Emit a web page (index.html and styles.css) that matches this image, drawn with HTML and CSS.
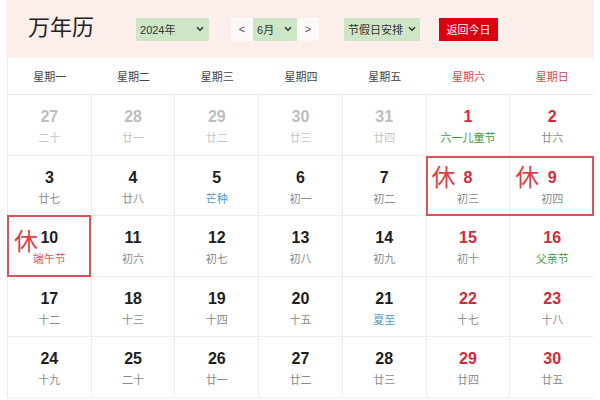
FILE: index.html
```html
<!DOCTYPE html>
<html lang="zh">
<head>
<meta charset="utf-8">
<link rel="stylesheet" href="styles.css">
</head>
<body>
<div class="page">
  <header class="bar">
    <h1 class="title">万年历</h1>
    <div class="sel sel-year"><span>2024年</span><svg class="chev" width="8" height="6" viewBox="0 0 8 6"><path d="M1 1.2 L4 4.2 L7 1.2" fill="none" stroke="#333" stroke-width="1.6"/></svg></div>
    <div class="month-group">
      <div class="nav">&lt;</div>
      <div class="sel sel-month"><span>6月</span><svg class="chev" width="8" height="6" viewBox="0 0 8 6"><path d="M1 1.2 L4 4.2 L7 1.2" fill="none" stroke="#333" stroke-width="1.6"/></svg></div>
      <div class="nav">&gt;</div>
    </div>
    <div class="sel sel-hol"><span>节假日安排</span><svg class="chev" width="8" height="6" viewBox="0 0 8 6"><path d="M1 1.2 L4 4.2 L7 1.2" fill="none" stroke="#333" stroke-width="1.6"/></svg></div>
    <div class="today">返回今日</div>
  </header>

  <div class="weekdays">
    <div>星期一</div><div>星期二</div><div>星期三</div><div>星期四</div><div>星期五</div><div class="we">星期六</div><div class="we">星期日</div>
  </div>

  <div class="grid">
    <div class="cell other"><b>27</b><span>二十</span></div>
    <div class="cell other"><b>28</b><span>廿一</span></div>
    <div class="cell other"><b>29</b><span>廿二</span></div>
    <div class="cell other"><b>30</b><span>廿三</span></div>
    <div class="cell other"><b>31</b><span>廿四</span></div>
    <div class="cell red"><b>1</b><span class="fest">六一儿童节</span></div>
    <div class="cell red"><b>2</b><span>廿六</span></div>

    <div class="cell"><b>3</b><span>廿七</span></div>
    <div class="cell"><b>4</b><span>廿八</span></div>
    <div class="cell"><b>5</b><span class="term">芒种</span></div>
    <div class="cell"><b>6</b><span>初一</span></div>
    <div class="cell"><b>7</b><span>初二</span></div>
    <div class="cell red"><i class="rest">休</i><b>8</b><span>初三</span></div>
    <div class="cell red"><i class="rest">休</i><b>9</b><span>初四</span></div>

    <div class="cell"><i class="rest rest-low">休</i><b>10</b><span class="holi">端午节</span></div>
    <div class="cell"><b>11</b><span>初六</span></div>
    <div class="cell"><b>12</b><span>初七</span></div>
    <div class="cell"><b>13</b><span>初八</span></div>
    <div class="cell"><b>14</b><span>初九</span></div>
    <div class="cell red"><b>15</b><span>初十</span></div>
    <div class="cell red"><b>16</b><span class="fest">父亲节</span></div>

    <div class="cell"><b>17</b><span>十二</span></div>
    <div class="cell"><b>18</b><span>十三</span></div>
    <div class="cell"><b>19</b><span>十四</span></div>
    <div class="cell"><b>20</b><span>十五</span></div>
    <div class="cell"><b>21</b><span class="term">夏至</span></div>
    <div class="cell red"><b>22</b><span>十七</span></div>
    <div class="cell red"><b>23</b><span>十八</span></div>

    <div class="cell"><b>24</b><span>十九</span></div>
    <div class="cell"><b>25</b><span>二十</span></div>
    <div class="cell"><b>26</b><span>廿一</span></div>
    <div class="cell"><b>27</b><span>廿二</span></div>
    <div class="cell"><b>28</b><span>廿三</span></div>
    <div class="cell red"><b>29</b><span>廿四</span></div>
    <div class="cell red"><b>30</b><span>廿五</span></div>

    <div class="mark mark-weekend"></div>
    <div class="mark mark-duanwu"></div>
  </div>
</div>
</body>
</html>
```

FILE: styles.css
```css
* { box-sizing: border-box; }
html, body { margin: 0; padding: 0; background: #fff; }
body {
  width: 600px;
  height: 400px;
  overflow: hidden;
  font-family: "Liberation Sans", "Noto Sans CJK SC", sans-serif;
  color: #333;
}
.page {
  margin-left: 6px;
  width: 588px;
}
.bar {
  height: 58px;
  background: #fbeeeb;
  display: flex;
  align-items: center;
  padding-left: 22px;
}
.title {
  margin: 0 42px 0 0;
  font-family: "Noto Sans CJK SC", sans-serif;
  font-weight: 400;
  font-size: 22px;
  line-height: 26px;
  color: #222;
  position: relative;
  top: -4px;
}
.sel {
  height: 23px;
  background: #cde6c6;
  display: flex;
  align-items: center;
  justify-content: space-between;
  padding: 0 5px 0 4px;
  font-family: "Liberation Sans", "Noto Sans CJK SC", sans-serif;
  font-size: 11px;
  color: #333;
}
.chev { display: block; }
.sel-year { width: 73px; }
.month-group {
  display: flex;
  margin-left: 22px;
}
.nav {
  width: 22px;
  height: 23px;
  background: #fdf9f8;
  display: flex;
  align-items: center;
  justify-content: center;
  font-size: 11px;
  color: #555;
}
.sel-month { width: 44px; }
.sel-hol { width: 76px; margin-left: 25px; padding-right: 4px; }
.today {
  margin-left: 19px;
  width: 59px;
  height: 23px;
  background: #d9000f;
  color: #fff;
  font-family: "Noto Sans CJK SC", sans-serif;
  font-size: 11px;
  display: flex;
  align-items: center;
  justify-content: center;
}

.weekdays {
  margin-left: 1px;
  height: 37px;
  display: grid;
  grid-template-columns: repeat(7, 1fr);
  align-items: center;
  border-left: 1px solid #ececec;
  border-bottom: 1px solid #ececec;
  font-family: "Noto Sans CJK SC", sans-serif;
  font-size: 11px;
  color: #444;
  text-align: center;
  padding-bottom: 1px;
}
.weekdays .we { color: #cf4a4a; }

.grid {
  position: relative;
  margin-left: 1px;
  display: grid;
  grid-template-columns: repeat(7, 1fr);
  grid-template-rows: repeat(5, 60.6px);
  border-left: 1px solid #ececec;
}
.cell {
  position: relative;
  border-right: 1px solid #ededed;
  border-bottom: 1px solid #ededed;
  display: flex;
  flex-direction: column;
  align-items: center;
  padding-top: 13px;
}
.cell:nth-child(7n) { border-right: none; }
.cell b {
  font-family: "Liberation Sans", sans-serif;
  font-weight: 700;
  font-size: 16px;
  line-height: 18px;
  color: #1e1e1e;
}
.cell span {
  margin-top: 4px;
  font-family: "Noto Sans CJK SC", sans-serif;
  font-size: 11px;
  line-height: 14px;
  color: #8a8a8a;
}
.cell.red b { color: #d3293b; }
.cell.other b { color: #bdbdbd; }
.cell.other span { color: #c6c6c6; }
.cell span.fest { color: #3f9a3f; }
.cell span.term { color: #4f9bc6; }
.cell span.holi { color: #d65a5a; }

.rest {
  position: absolute;
  left: 5px;
  top: 8px;
  font-style: normal;
  font-family: "Noto Sans CJK SC", sans-serif;
  font-size: 24px;
  line-height: 24px;
  color: #dc4146;
}
.rest-low { left: 6px; top: 12px; }

.mark {
  position: absolute;
  border: 2px solid #d6545a;
  pointer-events: none;
}
.mark-weekend {
  grid-column: 6 / 8;
  grid-row: 2 / 3;
  top: 0; bottom: 0; left: -1px; right: 0;
}
.mark-duanwu {
  grid-column: 1 / 2;
  grid-row: 3 / 4;
  top: -1px; bottom: 0; left: -1px; right: 1px;
}
```
